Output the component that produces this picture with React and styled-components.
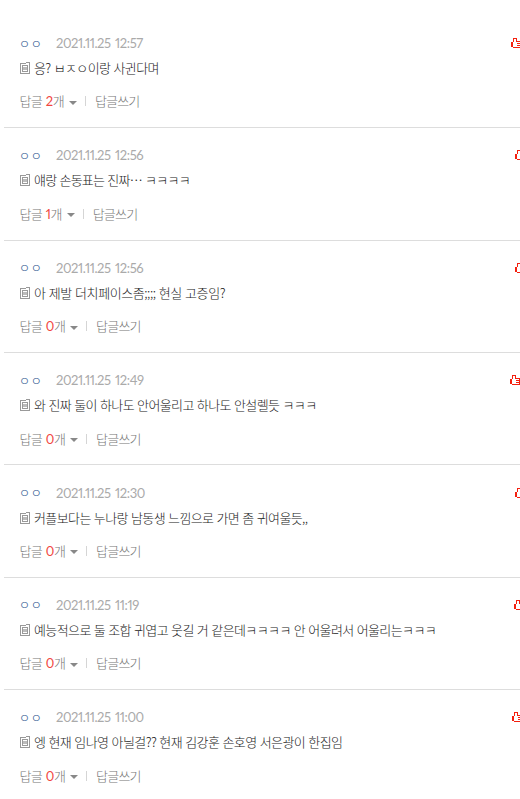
import React from "react";
import styled, { createGlobalStyle } from "styled-components";

const GlobalStyle = createGlobalStyle`
  body {
    margin: 0;
    background: #fff;
    overflow: hidden;
  }
`;

const List = styled.ul`
  list-style: none;
  box-sizing: border-box;
  height: 799px;
  margin: 0;
  padding: 15.9px 0 0 4px;
  overflow: hidden;
  font-family: "Noto Sans CJK KR", sans-serif;
  font-size: 13px;
  font-weight: 300;
`;

const Item = styled.li`
  box-sizing: border-box;
  height: 112.36px;
  padding: 17.2px 0 0 16px;
  border-bottom: 1px solid #ddd;
  white-space: nowrap;
`;

const Header = styled.div`
  display: flex;
  align-items: center;
  height: 20px;
`;

const Nick = styled.span`
  width: 37px;
  margin-left: -1px;
  color: #24508c;
  font-size: 12px;
  letter-spacing: 0.6px;
`;

const Time = styled.span`
  flex: 1;
  color: #aaa;
  font-family: Lato, sans-serif;
  font-weight: 400;
  font-variant-numeric: proportional-nums;
  letter-spacing: -0.4px;
  word-spacing: 1.5px;
`;

const Vote = styled.span`
  display: flex;
  flex: none;
  width: ${({ $width }) => $width}px;
  overflow: hidden;

  svg {
    flex: none;
  }
`;

const Body = styled.div`
  display: flex;
  align-items: center;
  gap: 4px;
  height: 20px;
  margin-top: 4.5px;
  color: #222;

  svg {
    margin-top: 1px;
  }
`;

const Comment = styled.span`
  letter-spacing: ${({ $spacing = -0.61 }) => $spacing}px;
  word-spacing: 0.8px;
`;

const Footer = styled.div`
  display: flex;
  align-items: center;
  height: 20px;
  margin: 13.4px 0 0 -0.5px;
  color: #777;
  letter-spacing: -0.8px;
`;

const Count = styled.span`
  margin: 1px 0 0 4px;
  color: #f1483f;
  font-family: Lato, sans-serif;
  font-weight: 400;
  font-variant-numeric: proportional-nums;
  letter-spacing: -0.5px;
`;

const Arrow = styled.span`
  margin: 4px 8px 0 5px;
  border: 4px solid transparent;
  border-top-color: #888;
  border-bottom: 0;
`;

const Bar = styled.span`
  width: 1px;
  height: 10px;
  margin: 1px 9px 0 0;
  background: #d5d5d5;
`;

const comments = [
  { time: "2021.11.25 12:57", text: "응? ㅂㅈㅇ이랑 사귄다며", replies: 2, vote: 9 },
  { time: "2021.11.25 12:56", text: "얘랑 손동표는 진짜… ㅋㅋㅋㅋ", replies: 1, vote: 5, spacing: -0.73 },
  { time: "2021.11.25 12:56", text: "아 제발 더치페이스좀;;;; 현실 고증임?", replies: 0, vote: 5, spacing: -0.43 },
  { time: "2021.11.25 12:49", text: "와 진짜 둘이 하나도 안어울리고 하나도 안설렐듯 ㅋㅋㅋ", replies: 0, vote: 10 },
  { time: "2021.11.25 12:30", text: "커플보다는 누나랑 남동생 느낌으로 가면 좀 귀여울듯,,", replies: 0, vote: 5 },
  { time: "2021.11.25 11:19", text: "예능적으로 둘 조합 귀엽고 웃길 거 같은데ㅋㅋㅋㅋ 안 어울려서 어울리는ㅋㅋㅋ", replies: 0, vote: 6 },
  { time: "2021.11.25 11:00", text: "엥 현재 임나영 아닐걸?? 현재 김강훈 손호영 서은광이 한집임", replies: 0, vote: 8, spacing: -0.58 },
];

const ThumbIcon = () => (
  <svg width="10" height="10" viewBox="0 0 10 10" fill="#f4200f" shapeRendering="crispEdges">
    <path d="M0 4h2v5H0zM2 0h4v1H2zM2 1h1v3H2zM5 1h1v3H5zM6 3h4v1H6zM6 5h4v1H6zM6 7h4v1H6zM2 9h8v1H2zM9 3h1v7H9z" />
  </svg>
);

const NoteIcon = () => (
  <svg width="10" height="12" viewBox="0 0 10 12" shapeRendering="crispEdges" fill="#999">
    <path d="M0 1h6v1H0zM6 0h4v1H6zM0 1h1v11H0zM9 0h1v12H9zM0 11h10v1H0z" />
    <path d="M2 3h6v1H2zM2 4h1v5H2zM7 4h1v5H7zM2 9h6v1H2z" />
    <path d="M3 5h4v3H3z" fill="#bbb" />
  </svg>
);

const App = () => {
  return (
    <>
      <GlobalStyle />
      <List>
        {comments.map((item, i) => (
          <Item key={i}>
            <Header>
              <Nick>ㅇㅇ</Nick>
              <Time>{item.time}</Time>
              <Vote $width={item.vote}>
                <ThumbIcon />
              </Vote>
            </Header>
            <Body>
              <NoteIcon />
              <Comment $spacing={item.spacing}>{item.text}</Comment>
            </Body>
            <Footer>
              답글<Count>{item.replies}</Count>개
              <Arrow />
              <Bar />
              답글쓰기
            </Footer>
          </Item>
        ))}
      </List>
    </>
  );
};

export default App;
